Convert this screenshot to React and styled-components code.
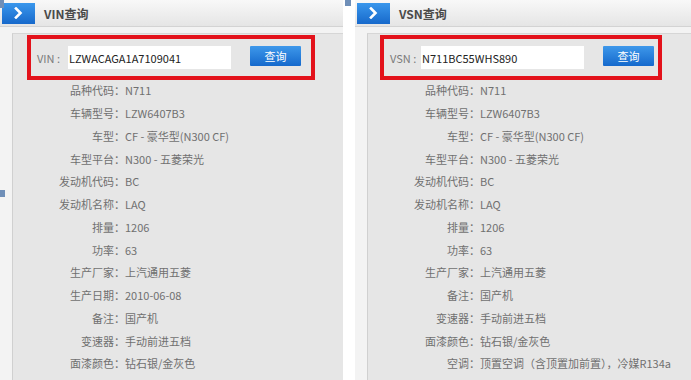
import React from 'react'
import styled, { createGlobalStyle } from 'styled-components'

const GlobalStyle = createGlobalStyle`
    html, body {
        margin:0;
        padding:0;
        background:#ffffff;
        overflow:hidden;
    }
    body {
        font-family:"Noto Sans CJK SC", "Noto Sans", sans-serif;
    }
`
const Page = styled.div`
    position:relative;
    display:flex;
    gap:12px;
    height:380px;
    width:691px;
    overflow:hidden;
    background:#ffffff;
`
const Panel = styled.div`
    width:${p => p.$w}px;
    flex-shrink:0;
    display:flex;
    flex-direction:column;
    background:#f3f3f3;
`
const Header = styled.div`
    height:27px;
    box-sizing:border-box;
    display:flex;
    align-items:center;
    gap:9px;
    padding-left:2px;
    background:linear-gradient(#f8f8f8, #e5e5e5);
    border-bottom:1px solid #d3d3d3;
`
const Tab = styled.div`
    width:33px;
    height:21px;
    display:flex;
    align-items:center;
    justify-content:center;
    background:linear-gradient(#3a97ec, #1769cb);
`
const Title = styled.div`
    font-size:12px;
    font-weight:700;
    color:#4a4a4a;
`
const Body = styled.div`
    flex:1;
    display:flex;
    padding:6px 0 0 12px;
`
const Inner = styled.div`
    flex:1;
    background:#e6e6e6;
    border-top:1px solid #d6d6d6;
    border-left:1px solid #d0d0d0;
    padding-top:1px;
`
const RedBox = styled.div`
    width:${p => p.$w}px;
    height:45px;
    box-sizing:border-box;
    margin-left:${p => p.$ml}px;
    border:4px solid #e3121b;
    display:flex;
    align-items:center;
    padding-left:6px;
`
const QueryLabel = styled.div`
    width:31px;
    flex-shrink:0;
    font-size:11px;
    color:#7a7a7a;
`
const Input = styled.input`
    width:163px;
    height:23px;
    box-sizing:border-box;
    border:none;
    outline:none;
    background:#ffffff;
    padding:0 0 0 1px;
    font-family:"Noto Sans CJK SC", "Noto Sans", sans-serif;
    font-size:11px;
    color:#222222;
`
const Button = styled.button`
    margin-left:19px;
    margin-bottom:3px;
    width:51px;
    height:20px;
    border:none;
    border-radius:1px;
    padding:0;
    background:linear-gradient(#3e98ea, #1569cc);
    color:#ffffff;
    font-family:"Noto Sans CJK SC", "Noto Sans", sans-serif;
    font-size:11px;
    cursor:pointer;
`
const List = styled.div`
    margin-top:-1px;
    padding-left:15px;
`
const Row = styled.div`
    display:flex;
    align-items:center;
    height:22.75px;
    font-size:11px;
    color:#707070;
    white-space:nowrap;
`
const Label = styled.div`
    width:86px;
    text-align:right;
`
const Colon = styled.div`
    width:11px;
`
const Handle = styled.div`
    position:absolute;
    left:${p => p.$x}px;
    top:${p => p.$y}px;
    width:${p => p.$w}px;
    height:${p => p.$h}px;
    background:#6f8fb8;
`

const Chevron = () => (
    <svg width="9" height="12" viewBox="0 0 9 12">
        <path d="M2 1.5 L6.5 6 L2 10.5" fill="none" stroke="#ffffff" strokeWidth="2.6" strokeLinecap="square" />
    </svg>
)

const vinRows = [
    ['品种代码', 'N711'],
    ['车辆型号', 'LZW6407B3'],
    ['车型', 'CF - 豪华型(N300 CF)'],
    ['车型平台', 'N300 - 五菱荣光'],
    ['发动机代码', 'BC'],
    ['发动机名称', 'LAQ'],
    ['排量', '1206'],
    ['功率', '63'],
    ['生产厂家', '上汽通用五菱'],
    ['生产日期', '2010-06-08'],
    ['备注', '国产机'],
    ['变速器', '手动前进五档'],
    ['面漆颜色', '钻石银/金灰色'],
]

const vsnRows = [
    ['品种代码', 'N711'],
    ['车辆型号', 'LZW6407B3'],
    ['车型', 'CF - 豪华型(N300 CF)'],
    ['车型平台', 'N300 - 五菱荣光'],
    ['发动机代码', 'BC'],
    ['发动机名称', 'LAQ'],
    ['排量', '1206'],
    ['功率', '63'],
    ['生产厂家', '上汽通用五菱'],
    ['备注', '国产机'],
    ['变速器', '手动前进五档'],
    ['面漆颜色', '钻石银/金灰色'],
    ['空调', '顶置空调（含顶置加前置），冷媒R134a'],
]

const QueryPanel = ({ width, title, field, code, rows, boxWidth, boxLeft }) => (
    <Panel $w={width}>
        <Header>
            <Tab><Chevron /></Tab>
            <Title>{title}</Title>
        </Header>
        <Body>
            <Inner>
                <RedBox $w={boxWidth} $ml={boxLeft}>
                    <QueryLabel>{field} :</QueryLabel>
                    <Input defaultValue={code} />
                    <Button>查询</Button>
                </RedBox>
                <List>
                    {rows.map(([k, v]) => (
                        <Row key={k}>
                            <Label>{k}</Label>
                            <Colon>：</Colon>
                            <div>{v}</div>
                        </Row>
                    ))}
                </List>
            </Inner>
        </Body>
    </Panel>
)

const App = () => {
    return (
        <>
            <GlobalStyle />
            <Page>
                <QueryPanel width={343} title="VIN查询" field="VIN" code="LZWACAGA1A7109041" rows={vinRows} boxWidth={288} boxLeft={14} />
                <QueryPanel width={340} title="VSN查询" field="VSN" code="N711BC55WHS890" rows={vsnRows} boxWidth={282} boxLeft={12} />
                <Handle $x={0} $y={0} $w={4} $h={8} />
                <Handle $x={345} $y={0} $w={6} $h={6} />
                <Handle $x={0} $y={190} $w={5} $h={7} />
            </Page>
        </>
    )
}

export default App
